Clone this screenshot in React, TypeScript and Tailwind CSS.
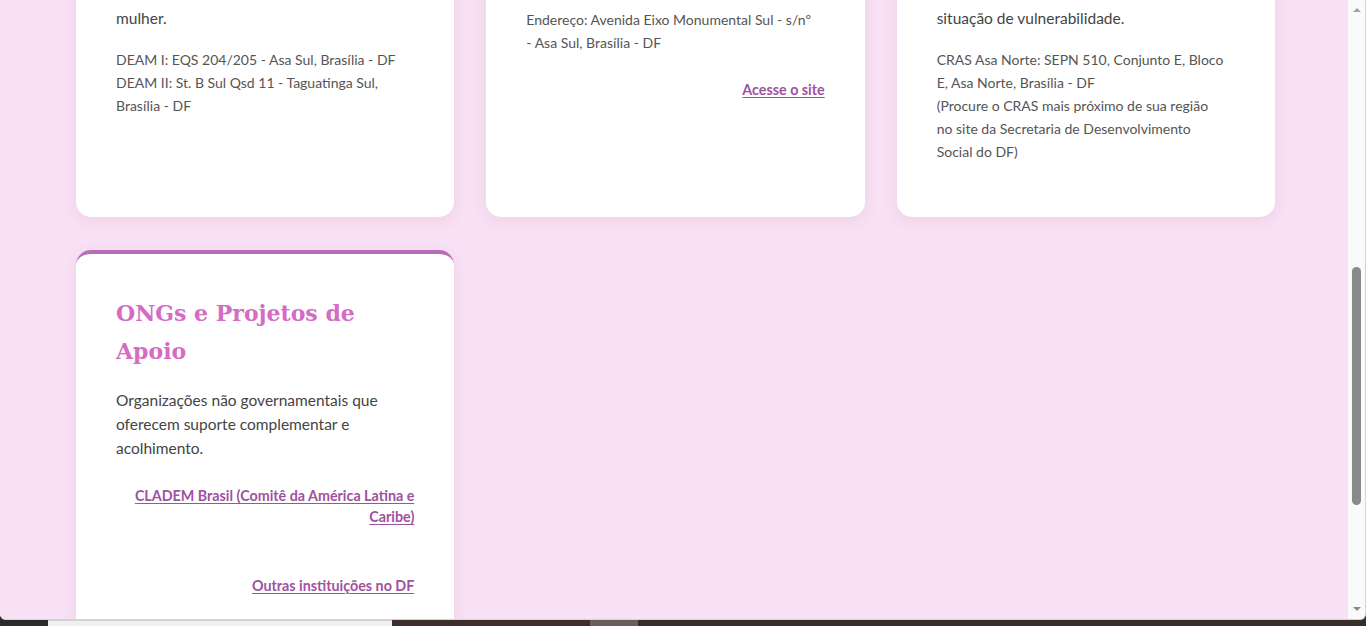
import React from "react";

interface Card {
  title?: string[];
  description: string[];
  details: string[];
  links?: { label: string[]; gap: string }[];
  top?: string;
}

// first row is scrolled past its top, so only the visible part is written out
const CARDS: Card[] = [
  {
    description: ["mulher."],
    details: [
      "DEAM I: EQS 204/205 - Asa Sul, Brasília - DF",
      "DEAM II: St. B Sul Qsd 11 - Taguatinga Sul,",
      "Brasília - DF",
    ],
    top: "pt-[46px]",
  },
  {
    description: [],
    details: ["Endereço: Avenida Eixo Monumental Sul - s/nº", "- Asa Sul, Brasília - DF"],
    links: [{ label: ["Acesse o site"], gap: "mt-[25px]" }],
    top: "pt-[48px]",
  },
  {
    description: ["situação de vulnerabilidade."],
    details: [
      "CRAS Asa Norte: SEPN 510, Conjunto E, Bloco",
      "E, Asa Norte, Brasília - DF",
      "(Procure o CRAS mais próximo de sua região",
      "no site da Secretaria de Desenvolvimento",
      "Social do DF)",
    ],
    top: "pt-[46px]",
  },
  {
    title: ["ONGs e Projetos de", "Apoio"],
    description: [
      "Organizações não governamentais que",
      "oferecem suporte complementar e",
      "acolhimento.",
    ],
    details: [],
    links: [
      { label: ["CLADEM Brasil (Comitê da América Latina e", "Caribe)"], gap: "mt-[25px]" },
      { label: ["Outras instituições no DF"], gap: "mt-[48px]" },
    ],
  },
];

const Lines = ({ lines }: { lines: string[] }) => (
  <>
    {lines.map((line, i) => (
      <React.Fragment key={i}>
        {i > 0 && <br />}
        {line}
      </React.Fragment>
    ))}
  </>
);

const ResourceCard = ({ card }: { card: Card }) => (
  <article
    className={`bg-white px-10 shadow-[0_4px_14px_rgba(170,90,160,0.12)] ${
      card.top
        ? `h-[257px] rounded-b-[15px] ${card.top}`
        : "h-[420px] rounded-[15px] border-t-4 border-[#b86bb8] pt-10"
    }`}
  >
    {card.title && (
      <h3 className="mb-[18px] font-['DejaVu_Serif',serif] text-[22px] font-bold leading-[38px] text-[#d46bc4]">
        <Lines lines={card.title} />
      </h3>
    )}
    {card.description.length > 0 && (
      <p className="mb-[18px] text-[15.5px] leading-[24px] text-[#444]">
        <Lines lines={card.description} />
      </p>
    )}
    {card.details.length > 0 && (
      <p className="mb-[18px] text-[14px] leading-[23px] text-[#555]">
        <Lines lines={card.details} />
      </p>
    )}
    {card.links?.map((link, i) => (
      <div key={i} className={`${link.gap} text-right text-[14.3px] font-bold leading-[21px]`}>
        <a href="#" className="text-[#a052a0] underline underline-offset-[1.5px]">
          <Lines lines={link.label} />
        </a>
      </div>
    ))}
  </article>
);

const Scrollbar = () => (
  <div className="flex w-[17px] flex-col items-center bg-[#fafafa]">
    <div className="mt-[8px] h-0 w-0 border-x-[4px] border-b-[4px] border-x-transparent border-b-[#a3a3a3]" />
    <div className="mt-[255px] h-[238px] w-[9px] rounded-full bg-[#8a8a8a]" />
    <div className="mt-auto mb-[8px] h-0 w-0 border-x-[4px] border-t-[4px] border-x-transparent border-t-[#8a8a8a]" />
  </div>
);

export default function App() {
  return (
    <div className="flex h-[626px] w-[1366px] flex-col overflow-hidden bg-[#3b2d29] font-['Lato',sans-serif]">
      <div className="flex h-[620px] overflow-hidden rounded-b-[6px] border-r border-b border-[#d4d4d4] bg-white">
        <main className="flex-1 overflow-hidden bg-[#f8e1f4]">
          <div className="-mt-[40px] grid w-[1275px] grid-cols-3 gap-x-8 gap-y-[33px] pl-[76px]">
            {CARDS.map((card, i) => (
              <ResourceCard key={i} card={card} />
            ))}
          </div>
        </main>
        <Scrollbar />
      </div>
      <div className="flex h-[6px]">
        <div className="w-[48px] bg-[#2b2b2b]" />
        <div className="w-[344px] border-t border-[#cfcfcf] bg-[#f0f0f0]" />
        <div className="w-[198px] bg-[#3d2e2a]" />
        <div className="w-[48px] bg-[#6b5d59]" />
        <div className="flex-1 bg-[#3a2c28]" />
      </div>
    </div>
  );
}
